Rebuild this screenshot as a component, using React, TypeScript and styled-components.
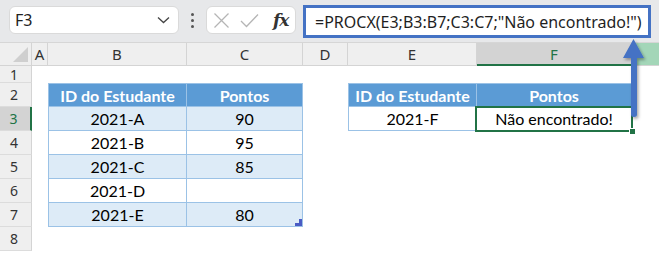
import React from 'react';
import styled, { createGlobalStyle, css } from 'styled-components';

const Global = createGlobalStyle`
  html, body { margin: 0; padding: 0; background: #fff; }
  body { width: 659px; height: 253px; overflow: hidden; }
`;

const Page = styled.div`
  position: relative;
  width: 659px;
  height: 253px;
  overflow: hidden;
  background: #fff;
  font-family: "Noto Sans", "Open Sans", sans-serif;
`;

const Toolbar = styled.div`
  height: 43px;
  box-sizing: border-box;
  display: flex;
  align-items: flex-start;
  padding: 6px 0 0 9px;
  background: #e7e8ea;
  border-bottom: 1px solid #d6d6d6;
`;

const NameBox = styled.div`
  width: 170px;
  height: 28px;
  box-sizing: border-box;
  background: #fff;
  border-radius: 6px;
  border: 1px solid #dadada;
  display: flex;
  align-items: center;
  justify-content: space-between;
  padding: 0 8px 0 5px;
  font-size: 16px;
  color: #222;
`;

const Dots = styled.div`
  width: 27px;
  height: 28px;
  display: flex;
  flex-direction: column;
  align-items: center;
  justify-content: center;
  gap: 3px;
  & > span {
    width: 3px;
    height: 3px;
    border-radius: 50%;
    background: #555;
  }
`;

const FxBox = styled.div`
  width: 90px;
  height: 28px;
  box-sizing: border-box;
  background: #fff;
  border-radius: 6px;
  border: 1px solid #dadada;
  display: flex;
  align-items: center;
  padding: 0 0 0 6px;
  gap: 10px;
`;

const Fx = styled.span`
  font-family: "DejaVu Serif", "Liberation Serif", serif;
  font-style: italic;
  font-weight: bold;
  font-size: 17px;
  color: #333;
  margin-left: 4px;
  letter-spacing: -1px;
`;

const FormulaBox = styled.div`
  margin-left: 7px;
  margin-top: -1px;
  width: 348px;
  height: 33px;
  box-sizing: border-box;
  border: 3px solid #4472c4;
  background: #fff;
  display: flex;
  align-items: center;
  padding-left: 9px;
  font-size: 16px;
  color: #1f1f1f;
  white-space: nowrap;
`;

const Sheet = styled.div`
  display: grid;
  grid-template-columns: 32px 16px 139px 116px 45px 129px 155px 27px;
  grid-template-rows: 23px 17px repeat(7, 24px);
`;

const Corner = styled.div`
  position: relative;
  background: #efefef;
  border-right: 1px solid #d4d4d4;
  border-bottom: 1px solid #d4d4d4;
  box-sizing: border-box;
  &::after {
    content: '';
    position: absolute;
    right: 3px;
    bottom: 3px;
    width: 0;
    height: 0;
    border-left: 15px solid transparent;
    border-bottom: 15px solid #cfcfcf;
  }
`;

const ColHead = styled.div<{ $sel?: boolean; $ghost?: boolean }>`
  box-sizing: border-box;
  background: #efefef;
  border-right: 1px solid #d4d4d4;
  border-bottom: 1px solid #d4d4d4;
  display: flex;
  align-items: center;
  justify-content: center;
  font-size: 15px;
  color: #333;
  ${(p) =>
    p.$sel &&
    css`
      background: #d3d3d3;
      color: #217346;
      border-bottom: 2px solid #217346;
    `}
  ${(p) =>
    p.$ghost &&
    css`
      background: #a3d6b8;
      border-right: none;
    `}
`;

const RowHead = styled.div<{ $sel?: boolean }>`
  box-sizing: border-box;
  background: #efefef;
  border-right: 1px solid #d4d4d4;
  border-bottom: 1px solid #dcdcdc;
  display: flex;
  align-items: center;
  justify-content: center;
  padding-right: 3px;
  font-size: 14px;
  color: #333;
  ${(p) =>
    p.$sel &&
    css`
      background: #d3d3d3;
      color: #217346;
      border-right: 2px solid #217346;
    `}
`;

type Kind = 'head' | 'band' | 'plain' | 'blank';

const Cell = styled.div<{ $kind: Kind; $first?: boolean; $top?: boolean; $selected?: boolean; $handle?: boolean }>`
  position: relative;
  box-sizing: border-box;
  display: flex;
  align-items: center;
  justify-content: center;
  font-family: Lato, "Noto Sans", sans-serif;
  font-size: 16px;
  color: #000;
  white-space: nowrap;
  ${(p) =>
    p.$kind !== 'blank' &&
    css`
      border-right: 1px solid #9bc2e6;
      border-bottom: 1px solid #9bc2e6;
    `}
  ${(p) => p.$first && css`border-left: 1px solid #9bc2e6;`}
  ${(p) => p.$top && css`border-top: 1px solid #9bc2e6;`}
  ${(p) => p.$kind === 'band' && css`background: #ddebf7;`}
  ${(p) =>
    p.$kind === 'head' &&
    css`
      background: #5b9bd5;
      color: #fff;
      font-weight: bold;
      padding-top: 1px;
    `}
  ${(p) =>
    p.$selected &&
    css`
      &::before {
        content: '';
        position: absolute;
        left: -2px;
        top: -1px;
        right: -2px;
        bottom: -2px;
        border: 2px solid #217346;
      }
      &::after {
        content: '';
        position: absolute;
        right: -4px;
        bottom: -4px;
        width: 5px;
        height: 5px;
        background: #217346;
        border: 1px solid #fff;
        border-width: 1px 0 0 1px;
      }
    `}
  ${(p) =>
    p.$handle &&
    css`
      &::after {
        content: '';
        position: absolute;
        right: 0;
        bottom: 0;
        width: 7px;
        height: 3px;
        background: #4a5bc4;
        box-shadow: 4px -3px 0 -0px #4a5bc4;
        clip-path: polygon(0 -100%, 100% -100%, 100% 100%, 0 100%);
      }
      &::before {
        content: '';
        position: absolute;
        right: 0;
        bottom: 3px;
        width: 3px;
        height: 4px;
        background: #4a5bc4;
      }
    `}
`;

const Arrow = styled.svg`
  position: absolute;
  left: 615px;
  top: 36px;
  overflow: visible;
`;

type Row = { n: number; sel?: boolean; cells: { kind: Kind; text?: string; first?: boolean; top?: boolean; selected?: boolean; handle?: boolean }[] };

const rows: Row[] = [
  { n: 1, cells: [{ kind: 'blank' }, { kind: 'blank' }, { kind: 'blank' }, { kind: 'blank' }, { kind: 'blank' }, { kind: 'blank' }, { kind: 'blank' }] },
  {
    n: 2,
    cells: [
      { kind: 'blank' },
      { kind: 'head', text: 'ID do Estudante', first: true, top: true },
      { kind: 'head', text: 'Pontos', top: true },
      { kind: 'blank' },
      { kind: 'head', text: 'ID do Estudante', first: true, top: true },
      { kind: 'head', text: 'Pontos', top: true },
      { kind: 'blank' },
    ],
  },
  {
    n: 3,
    sel: true,
    cells: [
      { kind: 'blank' },
      { kind: 'band', text: '2021-A', first: true },
      { kind: 'band', text: '90' },
      { kind: 'blank' },
      { kind: 'plain', text: '2021-F', first: true },
      { kind: 'plain', text: 'Não encontrado!', selected: true },
      { kind: 'blank' },
    ],
  },
  { n: 4, cells: [{ kind: 'blank' }, { kind: 'plain', text: '2021-B', first: true }, { kind: 'plain', text: '95' }, { kind: 'blank' }, { kind: 'blank' }, { kind: 'blank' }, { kind: 'blank' }] },
  { n: 5, cells: [{ kind: 'blank' }, { kind: 'band', text: '2021-C', first: true }, { kind: 'band', text: '85' }, { kind: 'blank' }, { kind: 'blank' }, { kind: 'blank' }, { kind: 'blank' }] },
  { n: 6, cells: [{ kind: 'blank' }, { kind: 'plain', text: '2021-D', first: true }, { kind: 'plain', text: '' }, { kind: 'blank' }, { kind: 'blank' }, { kind: 'blank' }, { kind: 'blank' }] },
  { n: 7, cells: [{ kind: 'blank' }, { kind: 'band', text: '2021-E', first: true }, { kind: 'band', text: '80', handle: true }, { kind: 'blank' }, { kind: 'blank' }, { kind: 'blank' }, { kind: 'blank' }] },
  { n: 8, cells: [{ kind: 'blank' }, { kind: 'blank' }, { kind: 'blank' }, { kind: 'blank' }, { kind: 'blank' }, { kind: 'blank' }, { kind: 'blank' }] },
];

export default function App() {
  return (
    <Page>
      <Global />
      <Toolbar>
        <NameBox>
          <span>F3</span>
          <svg width="13" height="8" viewBox="0 0 13 8">
            <path d="M1 1.5 L6.5 6.5 L12 1.5" fill="none" stroke="#444" strokeWidth="1.3" />
          </svg>
        </NameBox>
        <Dots>
          <span />
          <span />
          <span />
        </Dots>
        <FxBox>
          <svg width="17" height="17" viewBox="0 0 17 17">
            <path d="M1.5 1.5 L15.5 15.5 M15.5 1.5 L1.5 15.5" stroke="#b5b5b5" strokeWidth="1.3" fill="none" />
          </svg>
          <svg width="19" height="15" viewBox="0 0 19 15">
            <path d="M1 8 L6.5 13.5 L18 1.5" stroke="#b5b5b5" strokeWidth="1.3" fill="none" />
          </svg>
          <Fx>fx</Fx>
        </FxBox>
        <FormulaBox>=PROCX(E3;B3:B7;C3:C7;"Não encontrado!")</FormulaBox>
      </Toolbar>
      <Sheet>
        <Corner />
        {['A', 'B', 'C', 'D', 'E', 'F'].map((c) => (
          <ColHead key={c} $sel={c === 'F'}>
            {c}
          </ColHead>
        ))}
        <ColHead $ghost />
        {rows.map((r) => (
          <React.Fragment key={r.n}>
            <RowHead $sel={r.sel}>{r.n}</RowHead>
            {r.cells.map((c, i) => (
              <Cell
                key={i}
                $kind={c.kind}
                $first={c.first}
                $top={c.top}
                $selected={c.selected}
                $handle={c.handle}
              >
                {c.text}
              </Cell>
            ))}
          </React.Fragment>
        ))}
      </Sheet>
      <Arrow width="32" height="90" viewBox="615 36 32 90">
        <defs>
          <filter id="sh" x="-50%" y="-20%" width="200%" height="150%">
            <feDropShadow dx="1.5" dy="2" stdDeviation="1.5" floodColor="#000" floodOpacity="0.35" />
          </filter>
        </defs>
        <g filter="url(#sh)">
          <path d="M633.5 39 L644 58 L637 58 L637 114.5 Q637 117 634 117 Q631 117 631 114.5 L631 58 L623 58 Z" fill="#4472c4" />
        </g>
      </Arrow>
    </Page>
  );
}
